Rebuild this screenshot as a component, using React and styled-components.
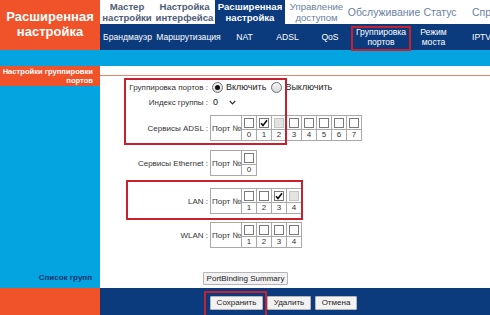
import React from 'react'
import styled, { createGlobalStyle } from 'styled-components'

const ORANGE = '#f0532a'
const CYAN = '#03a4e0'
const NAVY = '#0b3a7d'
const MARK = '#c8202e'

const Global = createGlobalStyle`
  html, body { margin: 0; padding: 0; background: #fff; }
  body { font-family: "Liberation Sans", Arial, sans-serif; }
`

const Page = styled.div`
  position: relative;
  width: 490px;
  height: 315px;
  overflow: hidden;
  display: grid;
  grid-template-columns: 100px 390px;
  grid-template-rows: 50px 16px 222px 27px;
`

const Brand = styled.div`
  background: ${ORANGE};
  color: #fff;
  font-weight: bold;
  font-size: 13px;
  line-height: 15px;
  display: flex;
  align-items: center;
  justify-content: center;
  text-align: center;
  padding-bottom: 2px;
`

const NavArea = styled.div`
  display: flex;
  flex-direction: column;
  overflow: hidden;
`

const TopNav = styled.div`
  height: 24px;
  display: flex;
  background: #fff;
`

const TopItem = styled.div`
  width: ${p => p.$w}px;
  flex: none;
  display: flex;
  align-items: center;
  justify-content: ${p => (p.$left ? 'flex-start' : 'center')};
  padding-left: ${p => (p.$left ? 12 : 0)}px;
  box-sizing: border-box;
  text-align: center;
  white-space: nowrap;
  font-size: ${p => (p.$single ? 10.5 : 9.6)}px;
  line-height: 11px;
  font-weight: ${p => (p.$bold || p.$active ? 'bold' : 'normal')};
  color: ${p => (p.$active ? '#fff' : p.$bold ? '#4f5d78' : '#6b7f9f')};
  background: ${p => (p.$active ? NAVY : 'transparent')};
`

const SubNav = styled.div`
  height: 26px;
  display: flex;
  background: ${NAVY};
`

const SubItem = styled.div`
  width: ${p => p.$w}px;
  flex: none;
  display: flex;
  align-items: center;
  justify-content: ${p => (p.$left ? 'flex-start' : 'center')};
  padding-left: ${p => (p.$left ? 15 : 0)}px;
  box-sizing: border-box;
  text-align: center;
  white-space: nowrap;
  color: #fff;
  font-size: 8.6px;
  line-height: 10px;
`

const Band = styled.div`
  grid-column: 1 / 3;
  background: ${CYAN};
`

const Sidebar = styled.div`
  background: ${CYAN};
  display: flex;
  flex-direction: column;
  justify-content: space-between;
`

const SideLabel = styled.div`
  background: ${ORANGE};
  color: #fff;
  font-weight: bold;
  font-size: 7.6px;
  line-height: 9px;
  text-align: right;
  padding: 1px 7px 0 0;
  height: 19px;
  white-space: nowrap;
`

const SideFoot = styled.div`
  color: #16366e;
  font-weight: bold;
  font-size: 8px;
  line-height: 10px;
  text-align: right;
  padding: 0 8px 5px 0;
`

const Content = styled.div`
  background: #fff;
  display: flex;
  flex-direction: column;
`

const ContentTop = styled.div`
  height: 9px;
  border-bottom: 1px solid #e4836a;
`

const Row = styled.div`
  margin-top: ${p => p.$mt}px;
  display: grid;
  grid-template-columns: 110px max-content;
  justify-items: start;
  align-items: center;
  min-height: 14px;
  font-size: 8px;
  color: #333;
`

const Label = styled.div`
  justify-self: end;
  text-align: right;
  padding-right: 2px;
  white-space: nowrap;
`

const Controls = styled.div`
  display: flex;
  align-items: center;
  padding-left: ${p => p.$pl || 0}px;
`

const ButtonRow = styled.div`
  margin-top: 24px;
  padding-left: 103px;
  display: flex;
`

const RadioWrap = styled.label`
  display: flex;
  align-items: center;
  gap: 3px;
  font-size: 9px;
  color: #222;
  margin-right: 5px;
`

const RadioCircle = styled.span`
  width: 9px;
  height: 9px;
  border-radius: 50%;
  border: 1px solid #6e6e6e;
  background: linear-gradient(#f4f4f4, #dcdcdc);
  display: flex;
  align-items: center;
  justify-content: center;
  &::after {
    content: '';
    width: 5px;
    height: 5px;
    border-radius: 50%;
    background: ${p => (p.$on ? '#111' : 'transparent')};
  }
`

const Select = styled.div`
  width: 28px;
  height: 13px;
  display: flex;
  align-items: center;
  justify-content: space-between;
  padding: 0 2px 0 3px;
  box-sizing: border-box;
  font-size: 9px;
  color: #111;
  background: #fff;
`

const PortTable = styled.table`
  border-collapse: collapse;
  border: 1px solid #a9a9a9;
  font-size: 8px;
  color: #333;
`

const HeadCell = styled.td`
  width: 29px;
  padding: 0 0 0 1px;
  border: 1px solid #a9a9a9;
  white-space: nowrap;
  vertical-align: middle;
`

const BoxCell = styled.td`
  width: 14px;
  height: 13px;
  padding: 0;
  border: 1px solid #a9a9a9;
  text-align: center;
  vertical-align: middle;
`

const NumCell = styled.td`
  height: 10px;
  padding: 0;
  border: 1px solid #a9a9a9;
  text-align: center;
  line-height: 10px;
`

const Box = styled.span`
  display: inline-flex;
  align-items: center;
  justify-content: center;
  width: 10px;
  height: 10px;
  box-sizing: border-box;
  border: 1px solid ${p => (p.$disabled ? '#c4c4c4' : '#7a7a7a')};
  background: ${p => (p.$disabled ? '#e3e3e3' : '#fff')};
  vertical-align: middle;
`

const Btn = styled.button`
  flex: none;
  height: ${p => (p.$h ? p.$h : 14)}px;
  width: ${p => p.$w}px;
  padding: 0;
  white-space: nowrap;
  font-family: "Liberation Sans", Arial, sans-serif;
  font-size: 8px;
  line-height: 8px;
  color: #222;
  background: #f2f2f2;
  border: 1px solid #b5b5b5;
  border-radius: 1px;
`

const FootLeft = styled.div`
  background: ${ORANGE};
`

const Footer = styled.div`
  background: ${NAVY};
  display: flex;
  gap: 4px;
  padding: 8px 0 0 110px;
  align-items: flex-start;
`

const Mark = styled.div`
  position: absolute;
  border: 2px solid ${MARK};
  box-sizing: border-box;
  pointer-events: none;
`

const Check = () => (
  <svg width="8" height="8" viewBox="0 0 8 8">
    <path d="M1 4.2 L3 6.4 L7 1.2" fill="none" stroke="#111" strokeWidth="1.6" />
  </svg>
)

const Ports = ({ ports }) => (
  <PortTable>
    <tbody>
      <tr>
        <HeadCell rowSpan={2}>Порт №</HeadCell>
        {ports.map(p => (
          <BoxCell key={p.n}>
            <Box $disabled={p.disabled}>{p.checked && <Check />}</Box>
          </BoxCell>
        ))}
      </tr>
      <tr>
        {ports.map(p => (
          <NumCell key={p.n}>{p.n}</NumCell>
        ))}
      </tr>
    </tbody>
  </PortTable>
)

const mk = (nums, checked = [], disabled = []) =>
  nums.map(n => ({ n, checked: checked.includes(n), disabled: disabled.includes(n) }))

const topItems = [
  { w: 54, bold: true, text: ['Мастер', 'настройки'] },
  { w: 61, bold: true, text: ['Настройка', 'интерфейса'] },
  { w: 70, active: true, text: ['Расширенная', 'настройка'] },
  { w: 63, text: ['Управление', 'доступом'] },
  { w: 72, single: true, text: ['Обслуживание'] },
  { w: 40, single: true, text: ['Статус'] },
  { w: 50, single: true, left: true, text: ['Справка'] },
]

const subItems = [
  { w: 55, text: ['Брандмауэр'] },
  { w: 67, text: ['Маршрутизация'] },
  { w: 45, text: ['NAT'] },
  { w: 41, text: ['ADSL'] },
  { w: 44, text: ['QoS'] },
  { w: 58, text: ['Группировка', 'портов'] },
  { w: 47, text: ['Режим', 'моста'] },
  { w: 52, left: true, text: ['IPTV'] },
]

const Lines = ({ text }) =>
  text.map((t, i) => (
    <React.Fragment key={t}>
      {i > 0 && <br />}
      {t}
    </React.Fragment>
  ))

export default function App() {
  return (
    <Page>
      <Global />
      <Brand>
        <div>
          Расширенная
          <br />
          настройка
        </div>
      </Brand>
      <NavArea>
        <TopNav>
          {topItems.map(it => (
            <TopItem
              key={it.text[0]}
              $w={it.w}
              $bold={it.bold}
              $active={it.active}
              $single={it.single}
              $left={it.left}
            >
              <div>
                <Lines text={it.text} />
              </div>
            </TopItem>
          ))}
        </TopNav>
        <SubNav>
          {subItems.map(it => (
            <SubItem key={it.text[0]} $w={it.w} $left={it.left}>
              <div>
                <Lines text={it.text} />
              </div>
            </SubItem>
          ))}
        </SubNav>
      </NavArea>

      <Band />

      <Sidebar>
        <SideLabel>
          Настройки группировки
          <br />
          портов
        </SideLabel>
        <SideFoot>Список групп</SideFoot>
      </Sidebar>

      <Content>
        <ContentTop />
        <Row $mt={4}>
          <Label>Группировка портов :</Label>
          <Controls $pl={2}>
            <RadioWrap>
              <RadioCircle $on />
              Включить
            </RadioWrap>
            <RadioWrap>
              <RadioCircle />
              Выключить
            </RadioWrap>
          </Controls>
        </Row>
        <Row $mt={1}>
          <Label>Индекс группы :</Label>
          <Controls>
            <Select>
              <span>0</span>
              <svg width="7" height="5" viewBox="0 0 7 5">
                <path d="M0.8 1 L3.5 3.8 L6.2 1" fill="none" stroke="#333" strokeWidth="1.2" />
              </svg>
            </Select>
          </Controls>
        </Row>
        <Row $mt={6}>
          <Label>Сервисы ADSL :</Label>
          <Ports ports={mk([0, 1, 2, 3, 4, 5, 6, 7], [1], [2])} />
        </Row>
        <Row $mt={9}>
          <Label>Сервисы Ethernet :</Label>
          <Ports ports={mk([0])} />
        </Row>
        <Row $mt={12}>
          <Label>LAN :</Label>
          <Ports ports={mk([1, 2, 3, 4], [3], [4])} />
        </Row>
        <Row $mt={8}>
          <Label>WLAN :</Label>
          <Ports ports={mk([1, 2, 3, 4])} />
        </Row>
        <ButtonRow>
          <Btn $w={85} $h={13}>PortBinding Summary</Btn>
        </ButtonRow>
      </Content>

      <FootLeft />
      <Footer>
        <Btn $w={53}>Сохранить</Btn>
        <Btn $w={44}>Удалить</Btn>
        <Btn $w={42}>Отмена</Btn>
      </Footer>

      <Mark style={{ left: 351, top: 26, width: 60, height: 25 }} />
      <Mark style={{ left: 124, top: 78, width: 163, height: 67 }} />
      <Mark style={{ left: 126, top: 180, width: 177, height: 40 }} />
      <Mark style={{ left: 204, top: 291, width: 63, height: 26 }} />
    </Page>
  )
}
